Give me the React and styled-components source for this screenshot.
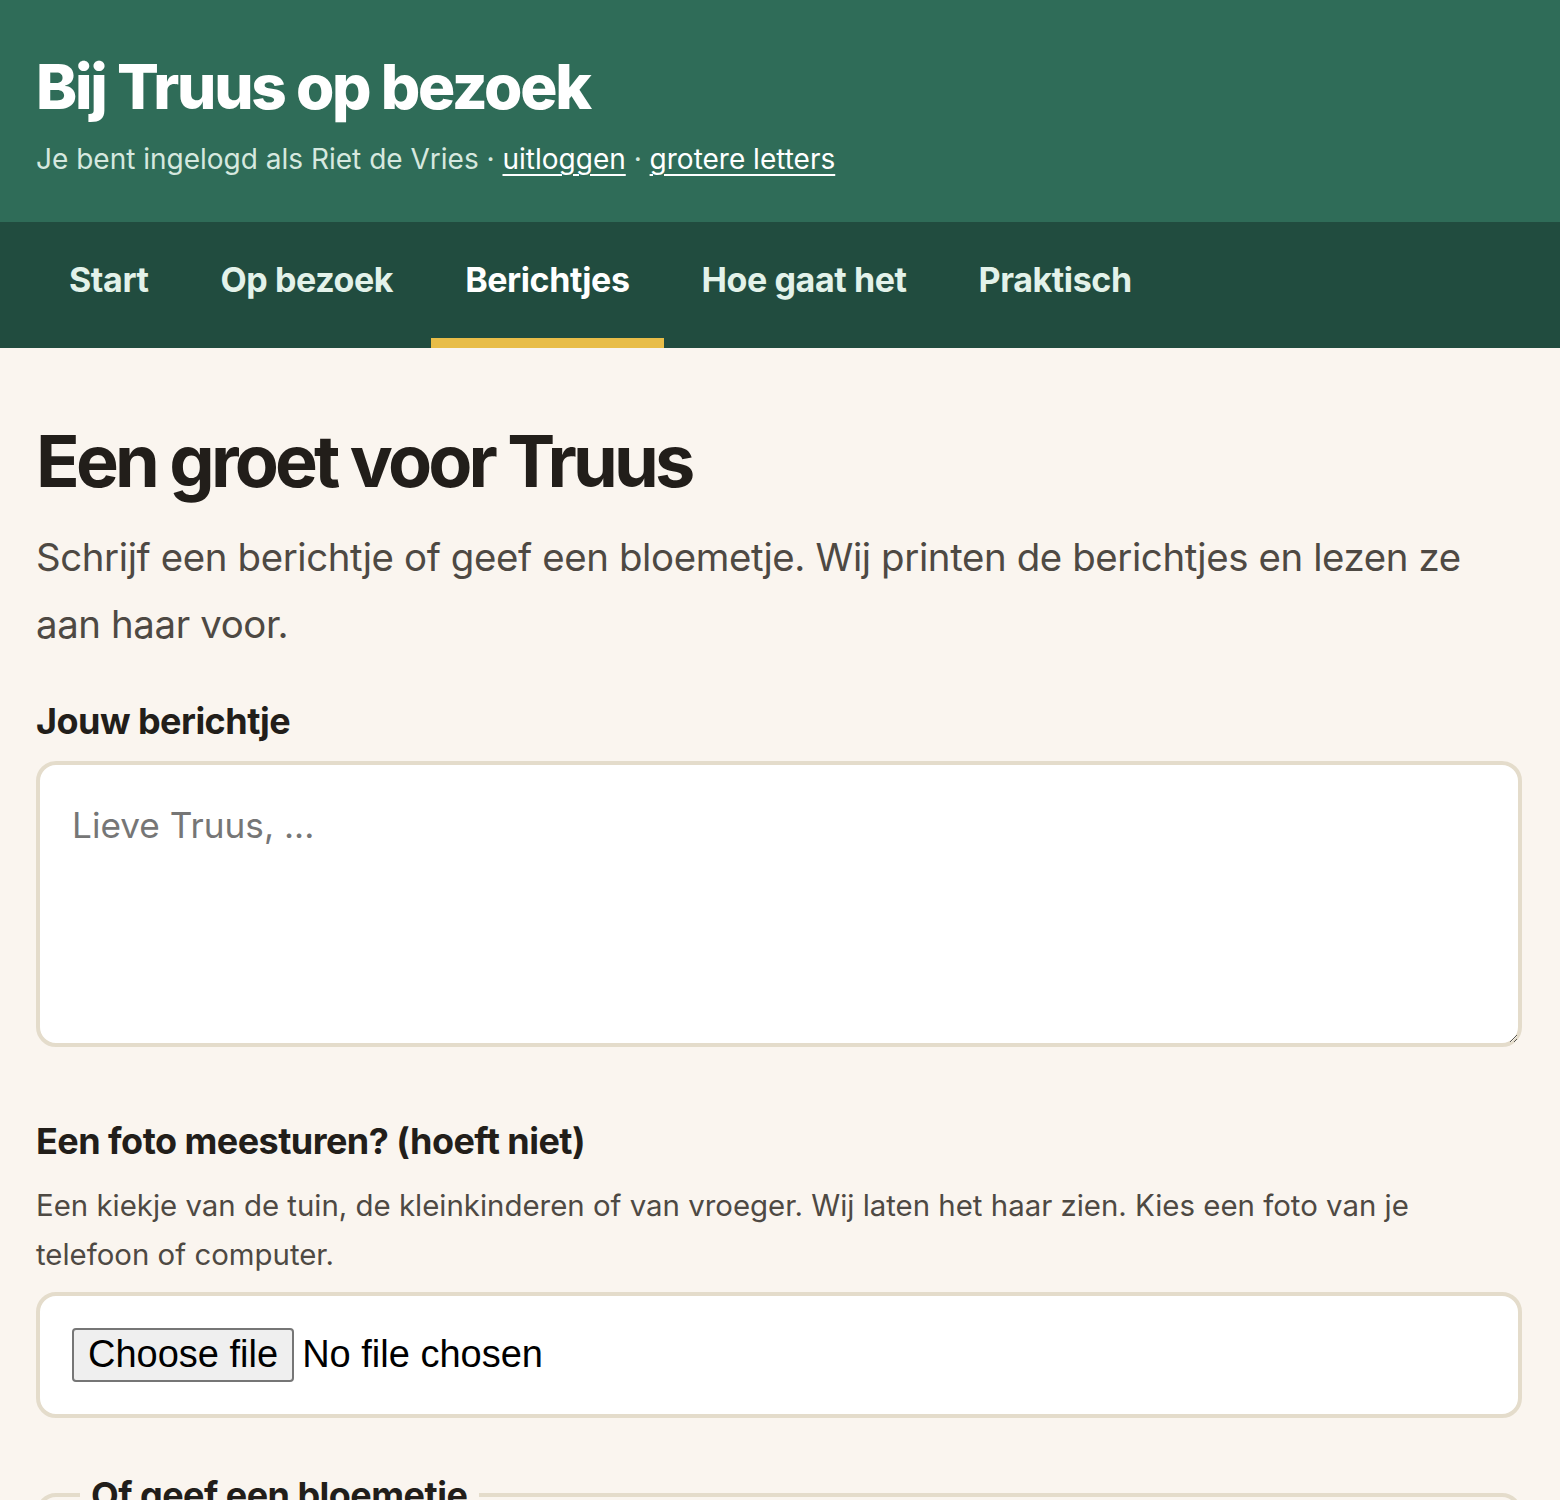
import React from 'react';
import styled, { createGlobalStyle } from 'styled-components';

const GlobalStyle = createGlobalStyle`
  * { box-sizing: border-box; }
  html, body {
    margin: 0;
    padding: 0;
    background: #faf5ef;
  }
  body {
    font-family: Inter, "Noto Sans", "Liberation Sans", sans-serif;
    color: #221e1a;
  }
`;

const Header = styled.header`
  background: #2f6c58;
  padding: 53px 36px 38px;
`;

const SiteTitle = styled.h1`
  margin: 0 0 14px;
  font-size: 62px;
  line-height: 68px;
  font-weight: 800;
  letter-spacing: -0.036em;
  color: #ffffff;
`;

const Who = styled.p`
  margin: 0;
  font-size: 28px;
  line-height: 49px;
  color: #d6e8df;

  a {
    color: #ffffff;
    text-decoration: underline;
    text-underline-offset: 5px;
    text-decoration-thickness: 2px;
  }
`;

const Nav = styled.nav`
  background: #214c3f;
  display: flex;
  gap: 4px;
  padding: 0 35px;
`;

const NavLink = styled.a`
  display: block;
  padding: 0 34px;
  line-height: 116px;
  font-size: 34px;
  font-weight: 700;
  letter-spacing: -0.012em;
  color: ${(p) => (p.$active ? '#ffffff' : '#e3f2ea')};
  text-decoration: none;
  border-bottom: 10px solid ${(p) => (p.$active ? '#e8bd48' : 'transparent')};
`;

const Main = styled.main`
  padding: 73px 38px 0 36px;
`;

const PageTitle = styled.h2`
  margin: 0 0 24px;
  font-size: 72px;
  line-height: 79px;
  font-weight: 700;
  letter-spacing: -0.053em;
  color: #221e1a;
`;

const Intro = styled.p`
  margin: 0 0 41px;
  font-size: 38.4px;
  line-height: 67.2px;
  color: #4e4943;
  letter-spacing: -0.01em;
`;

const Group = styled.div`
  margin-bottom: ${(p) => p.$gap || '48px'};
`;

const Label = styled.label`
  display: block;
  margin: 0 0 ${(p) => p.$after || '17px'};
  font-size: 36px;
  line-height: 44.8px;
  font-weight: 700;
  letter-spacing: -0.015em;
  color: #221e1a;
`;

const Help = styled.p`
  margin: 0 0 13px;
  font-size: 29.4px;
  line-height: 49px;
  color: #4e4943;
`;

const TextArea = styled.textarea`
  display: block;
  width: 100%;
  height: 286px;
  padding: 32px;
  border: 4px solid #e4dccb;
  border-radius: 20px;
  background: #ffffff;
  font-family: inherit;
  font-size: 35.2px;
  line-height: 1.6;
  color: #221e1a;
  resize: vertical;
  outline: none;

  &::placeholder {
    color: #767676;
  }
`;

const FileBox = styled.div`
  display: flex;
  align-items: center;
  gap: 8px;
  padding: 32px;
  border: 4px solid #e4dccb;
  border-radius: 20px;
  background: #ffffff;
  font-family: "Liberation Sans", Arial, sans-serif;
  font-size: 38px;
  color: #000000;
`;

const HiddenInput = styled.input`
  position: absolute;
  width: 1px;
  height: 1px;
  opacity: 0;
  pointer-events: none;
`;

const FileButton = styled.label`
  display: inline-block;
  padding: 3px 14px;
  border: 2px solid #767676;
  border-radius: 4px;
  background: #efefef;
  line-height: 1.15;
  cursor: pointer;
`;

const FileName = styled.span`
  line-height: 1.15;
`;

const Flowers = styled.fieldset`
  margin: 0;
  padding: 0 40px 40px;
  border: 4px solid #e4dccb;
  border-radius: 20px;
  min-height: 300px;
`;

const Legend = styled.legend`
  padding: 0 11px;
  font-size: 36px;
  line-height: 44.8px;
  font-weight: 700;
  letter-spacing: -0.015em;
  color: #221e1a;
`;

const navItems = ['Start', 'Op bezoek', 'Berichtjes', 'Hoe gaat het', 'Praktisch'];

export default function App() {
  return (
    <>
      <GlobalStyle />
      <Header>
        <SiteTitle>Bij Truus op bezoek</SiteTitle>
        <Who>
          Je bent ingelogd als Riet de Vries · <a href="#uit">uitloggen</a> · <a href="#groot">grotere letters</a>
        </Who>
      </Header>
      <Nav>
        {navItems.map((item) => (
          <NavLink key={item} href="#" $active={item === 'Berichtjes'}>
            {item}
          </NavLink>
        ))}
      </Nav>
      <Main>
        <PageTitle>Een groet voor Truus</PageTitle>
        <Intro>
          Schrijf een berichtje of geef een bloemetje. Wij printen de berichtjes en lezen ze aan haar voor.
        </Intro>
        <Group $gap="72px">
          <Label htmlFor="bericht">Jouw berichtje</Label>
          <TextArea id="bericht" placeholder="Lieve Truus, ..." />
        </Group>
        <Group $gap="55px">
          <Label htmlFor="foto">Een foto meesturen? (hoeft niet)</Label>
          <Help>
            Een kiekje van de tuin, de kleinkinderen of van vroeger. Wij laten het haar zien. Kies een foto van je telefoon of computer.
          </Help>
          <FileBox>
            <HiddenInput id="foto" type="file" accept="image/*" />
            <FileButton htmlFor="foto">Choose file</FileButton>
            <FileName>No file chosen</FileName>
          </FileBox>
        </Group>
        <Flowers>
          <Legend>Of geef een bloemetje</Legend>
        </Flowers>
      </Main>
    </>
  );
}
